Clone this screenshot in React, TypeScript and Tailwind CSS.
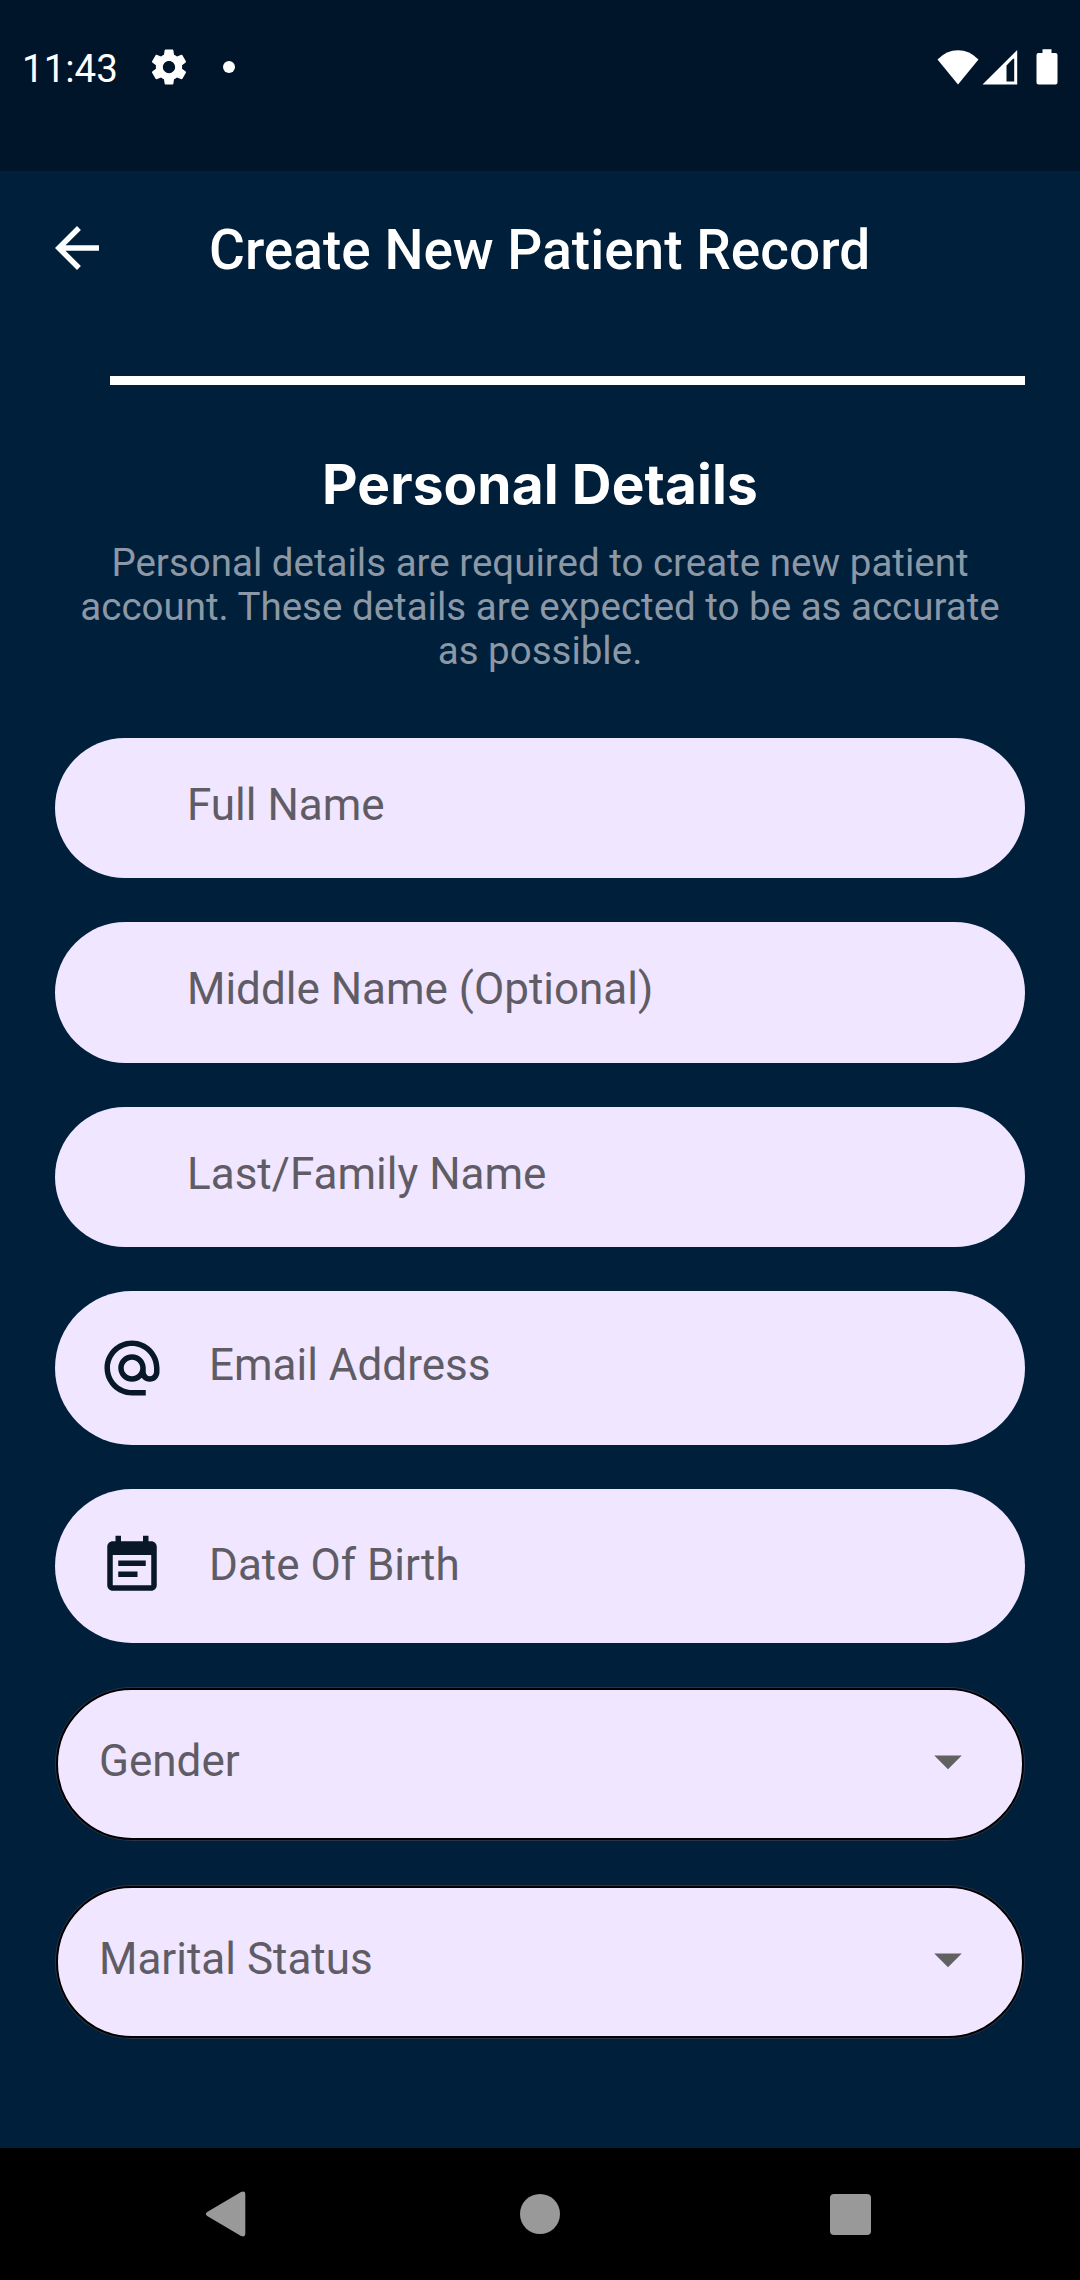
import React from "react";

const iconPaths = {
  settings:
    "M19.43 12.98c.04-.32.07-.64.07-.98s-.03-.66-.07-.98l2.11-1.65c.19-.15.24-.42.12-.64l-2-3.46c-.12-.22-.39-.3-.61-.22l-2.49 1c-.52-.4-1.08-.73-1.69-.98l-.38-2.65C14.46 2.18 14.25 2 14 2h-4c-.25 0-.46.18-.49.42l-.38 2.65c-.61.25-1.17.59-1.69.98l-2.49-1c-.23-.09-.49 0-.61.22l-2 3.46c-.13.22-.07.49.12.64l2.11 1.65c-.04.32-.07.65-.07.98s.03.66.07.98l-2.11 1.65c-.19.15-.24.42-.12.64l2 3.46c.12.22.39.3.61.22l2.49-1c.52.4 1.08.73 1.69.98l.38 2.65c.03.24.24.42.49.42h4c.25 0 .46-.18.49-.42l.38-2.65c.61-.25 1.17-.59 1.69-.98l2.49 1c.23.09.49 0 .61-.22l2-3.46c.12-.22.07-.49-.12-.64l-2.11-1.65zM12 15.5c-1.93 0-3.5-1.57-3.5-3.5s1.57-3.5 3.5-3.5 3.5 1.57 3.5 3.5-1.57 3.5-3.5 3.5z",
  back: "M20 11H7.83l5.59-5.59L12 4l-8 8 8 8 1.41-1.41L7.83 13H20v-2z",
  email:
    "M12 2C6.48 2 2 6.48 2 12s4.48 10 10 10h5v-2h-5c-4.34 0-8-3.66-8-8s3.66-8 8-8 8 3.66 8 8v1.43c0 .79-.71 1.57-1.5 1.57s-1.5-.78-1.5-1.57V12c0-2.76-2.24-5-5-5s-5 2.24-5 5 2.24 5 5 5c1.38 0 2.64-.56 3.54-1.47.65.89 1.77 1.47 2.96 1.47 1.97 0 3.5-1.6 3.5-3.57V12c0-5.52-4.48-10-10-10zm0 13c-1.66 0-3-1.34-3-3s1.34-3 3-3 3 1.34 3 3-1.34 3-3 3z",
  calendar:
    "M17 10H7v2h10v-2zm2-7h-1V1h-2v2H8V1H6v2H5c-1.11 0-1.99.9-1.99 2L3 19c0 1.1.89 2 2 2h14c1.1 0 2-.9 2-2V5c0-1.1-.9-2-2-2zm0 16H5V8h14v11zm-5-5H7v2h7v-2z",
  dropdown: "M7 10l5 5 5-5z",
};

function Icon({ name, className }: { name: keyof typeof iconPaths; className: string }) {
  return (
    <svg viewBox="0 0 24 24" fill="currentColor" className={className}>
      <path d={iconPaths[name]} />
    </svg>
  );
}

function StatusBar() {
  return (
    <header className="flex h-[171px] shrink-0 items-start bg-[#00142a] pr-[22px] pl-[22px] text-white">
      <div className="mt-[46px] flex h-[42px] items-center">
        <span className="w-[125.5px] pt-[4px] text-[38.5px] leading-[46px]">11:43</span>
        <Icon name="settings" className="size-[42px]" />
        <span className="ml-[33.5px] size-3 rounded-full bg-white" />
      </div>
      <div className="mt-[49px] ml-auto flex h-9 items-start">
        <svg width="42" height="36" viewBox="0 0 42 36" fill="white">
          <path d="M21 35.5 0.5 10.5Q9.5 1.3 21 1.3T41.5 10.5Z" />
        </svg>
        <svg width="36" height="36" viewBox="0 0 36 36" fill="white" className="ml-[2.5px]">
          <path fillRule="evenodd" d="M0.5 35.6 35.2 1V35.6ZM24.5 32.6H32.2V9.8H31L24.5 16.6Z" />
        </svg>
        <svg width="22" height="36" viewBox="0 0 22 36" fill="white" className="ml-[18.5px]">
          <path d="M6.5 0.3h9v3.6h4a2 2 0 0 1 2 2v27.7a2 2 0 0 1-2 2h-17a2 2 0 0 1-2-2V5.9a2 2 0 0 1 2-2h4z" />
        </svg>
      </div>
    </header>
  );
}

function TextField({ label, raise }: { label: string; raise: string }) {
  return (
    <label className={`flex h-[140.25px] items-center rounded-full bg-[#f0e6ff] pl-[132px] ${raise}`}>
      {label}
    </label>
  );
}

function IconField({ label, icon, raise }: { label: string; icon: "email" | "calendar"; raise: string }) {
  return (
    <label className="flex h-[154px] items-center rounded-full bg-[#f0e6ff] pl-11">
      <Icon name={icon} className="size-[66px] text-[#081828]" />
      <span className={`ml-11 ${raise}`}>{label}</span>
    </label>
  );
}

function SelectField({ label }: { label: string }) {
  return (
    <div className="h-[154px] rounded-full bg-[#2b3347] p-px">
      <div className="flex h-full items-center justify-between rounded-full border-2 border-black bg-[#f0e6ff] pr-[41px] pb-[5px] pl-[41px]">
        <span>{label}</span>
        <Icon name="dropdown" className="size-[66px] text-[#616161]" />
      </div>
    </div>
  );
}

function NavigationBar() {
  return (
    <footer className="flex h-[132px] shrink-0 items-center justify-between bg-black pr-[209px] pl-[205px] text-[#999999]">
      <svg width="41" height="46" viewBox="0 0 41 46" fill="currentColor">
        <path d="M2.2 21 36 1Q40.3-.6 40.3 3V43Q40.3 46.6 36 45L2.2 25Q-.5 23 2.2 21Z" />
      </svg>
      <span className="ml-[4px] size-10 rounded-full bg-[#999999]" />
      <span className="size-[41px] rounded-[4px] bg-[#999999]" />
    </footer>
  );
}

export default function App() {
  return (
    <div className="flex h-[2280px] w-[1080px] flex-col overflow-hidden bg-[#001f3a] font-[Roboto,sans-serif]">
      <StatusBar />
      <main className="flex flex-1 flex-col px-[55px]">
        <div className="-ml-[11px] flex h-[154px] items-center text-white">
          <Icon name="back" className="size-[66px]" />
          <h1 className="ml-[99px] pt-[4px] text-[55px] leading-[64px] font-medium whitespace-nowrap">
            Create New Patient Record
          </h1>
        </div>
        <div className="mt-[51px] ml-[55px] h-[9px] shrink-0 bg-white" />
        <h2 className="mt-[65px] text-center font-[Inter,sans-serif] text-[55px] leading-[68px] font-bold tracking-[0.1px] text-white">
          Personal Details
        </h2>
        <p className="mt-[23px] text-center text-[38.5px] leading-[44px] whitespace-nowrap text-[#8c98a5]">
          Personal details are required to create new patient
          <br />
          account. These details are expected to be as accurate
          <br />
          as possible.
        </p>
        <form className="mt-[65px] flex flex-col gap-11 text-[44px] leading-[52px] text-[#605c66]">
          <TextField label="Full Name" raise="pb-[7px]" />
          <TextField label="Middle Name (Optional)" raise="pb-[7px]" />
          <TextField label="Last/Family Name" raise="pb-[5px]" />
          <IconField label="Email Address" icon="email" raise="pb-[6px]" />
          <IconField label="Date Of Birth" icon="calendar" raise="pb-[1px]" />
          <SelectField label="Gender" />
          <SelectField label="Marital Status" />
        </form>
      </main>
      <NavigationBar />
    </div>
  );
}
